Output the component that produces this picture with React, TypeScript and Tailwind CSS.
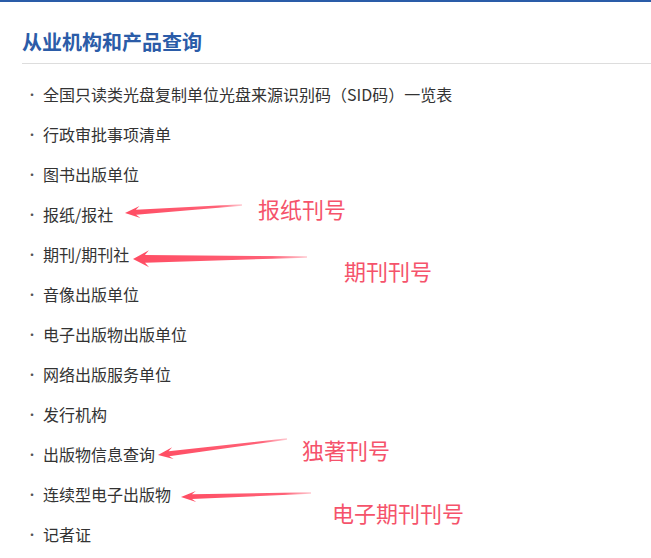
import type { FC } from 'react';

const items = [
  '全国只读类光盘复制单位光盘来源识别码（SID码）一览表',
  '行政审批事项清单',
  '图书出版单位',
  '报纸/报社',
  '期刊/期刊社',
  '音像出版单位',
  '电子出版物出版单位',
  '网络出版服务单位',
  '发行机构',
  '出版物信息查询',
  '连续型电子出版物',
  '记者证',
];

type Pt = [number, number];

// tapered arrow with a barbed head, tip first then tail
const arrowPoints = (tip: Pt, tail: Pt, hl: number, hw: number, sw: number) => {
  const dx = tip[0] - tail[0];
  const dy = tip[1] - tail[1];
  const len = Math.hypot(dx, dy);
  const ux = dx / len;
  const uy = dy / len;
  const nx = -uy;
  const ny = ux;
  const at = (along: number, side: number): string =>
    `${tip[0] - ux * along + nx * side},${tip[1] - uy * along + ny * side}`;
  return [
    at(0, 0),
    at(hl, hw),
    at(hl - 4, sw),
    at(len, 0.7),
    at(len, -0.7),
    at(hl - 4, -sw),
    at(hl, -hw),
  ].join(' ');
};

const arrows: { tip: Pt; tail: Pt; hl: number; hw: number; sw: number }[] = [
  { tip: [125, 211], tail: [242, 203], hl: 15, hw: 6, sw: 2.5 },
  { tip: [133, 257], tail: [307, 255], hl: 16, hw: 8.5, sw: 3.8 },
  { tip: [158, 453], tail: [287, 437], hl: 15, hw: 6, sw: 2.5 },
  { tip: [181, 495], tail: [311, 491], hl: 15, hw: 5.5, sw: 2.3 },
];

const notes = [
  { text: '报纸刊号', cls: 'left-[258px] top-[191px]' },
  { text: '期刊刊号', cls: 'left-[344px] top-[253px]' },
  { text: '独著刊号', cls: 'left-[302px] top-[432px]' },
  { text: '电子期刊刊号', cls: 'left-[332px] top-[495px]' },
];

const App: FC = () => {
  return (
    <div
      className="relative w-[651px] h-[558px] overflow-hidden bg-white border-t-2 border-[#2a5ca8]"
      style={{ fontFamily: '"Microsoft YaHei", "Noto Sans CJK SC", "Noto Sans", sans-serif' }}
    >
      <div className="pl-[22px]">
        <h2 className="pt-[26px] pb-[7px] text-[20px] leading-[28px] font-bold text-[#2b5ca8] border-b border-[#dddddd]">
          从业机构和产品查询
        </h2>
        <ul className="mt-[10px]">
          {items.map((item) => (
            <li key={item} className="flex h-[40px] items-center text-[16px] text-[#333333]">
              <span className="w-[21px] pl-[4px] pt-[2px] text-[12px] text-[#555555]">·</span>
              <span>{item}</span>
            </li>
          ))}
        </ul>
      </div>

      <svg className="absolute left-0 top-0" width={651} height={558}>
        <defs>
          {arrows.map((a, i) => (
            <linearGradient
              key={i}
              id={`fade${i}`}
              gradientUnits="userSpaceOnUse"
              x1={a.tail[0]}
              y1={a.tail[1]}
              x2={a.tip[0]}
              y2={a.tip[1]}
            >
              <stop offset="0" stopColor="#ff5068" stopOpacity="0.3" />
              <stop offset="0.2" stopColor="#ff5068" stopOpacity="0.9" />
              <stop offset="1" stopColor="#ff4d63" />
            </linearGradient>
          ))}
        </defs>
        {arrows.map((a, i) => (
          <polygon key={i} points={arrowPoints(a.tip, a.tail, a.hl, a.hw, a.sw)} fill={`url(#fade${i})`} />
        ))}
      </svg>

      {notes.map((n) => (
        <div
          key={n.text}
          className={`absolute ${n.cls} text-[22px] leading-[30px] text-[#f5536b] whitespace-nowrap`}
        >
          {n.text}
        </div>
      ))}
    </div>
  );
};

export default App;
